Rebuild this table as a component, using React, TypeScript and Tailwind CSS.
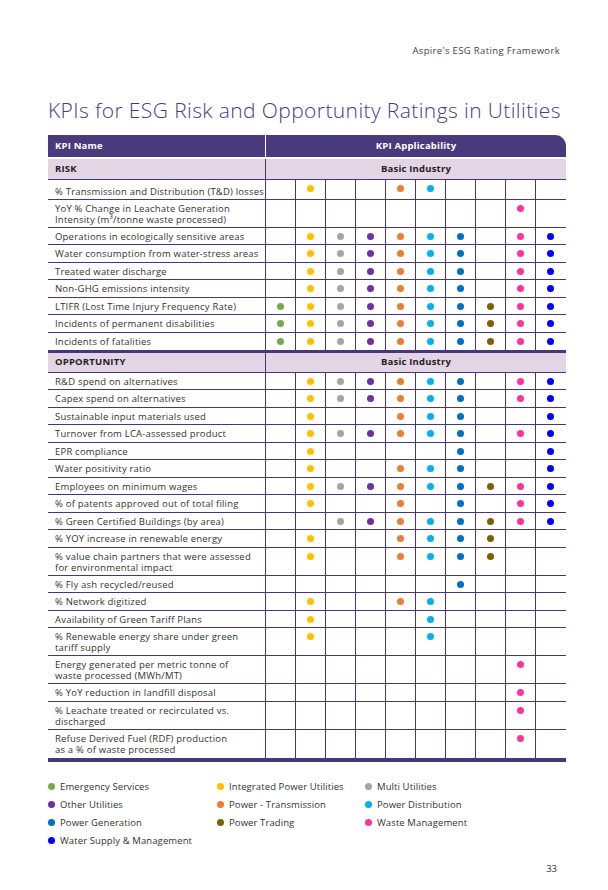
import React from 'react';

const COLORS = ['#70ad47', '#ffc000', '#a5a5a5', '#7030a0', '#ed7d31', '#00b0f0', '#0070c0', '#7f6000', '#ff3399', '#0000ff'];

type Row = { name: React.ReactNode; tall?: boolean; first?: boolean; dots: number[] };

const A8 = [2, 3, 4, 5, 6, 7, 9, 10];
const ALL = [1, 2, 3, 4, 5, 6, 7, 8, 9, 10];

const risk: Row[] = [
  { name: '% Transmission and Distribution (T&D) losses', first: true, dots: [2, 5, 6] },
  { name: <>YoY % Change in Leachate Generation<br />Intensity (m³/tonne waste processed)</>, tall: true, dots: [9] },
  { name: 'Operations in ecologically sensitive areas', dots: A8 },
  { name: 'Water consumption from water-stress areas', dots: A8 },
  { name: 'Treated water discharge', dots: A8 },
  { name: 'Non-GHG emissions intensity', dots: A8 },
  { name: 'LTIFR (Lost Time Injury Frequency Rate)', dots: ALL },
  { name: 'Incidents of permanent disabilities', dots: ALL },
  { name: 'Incidents of fatalities', dots: ALL },
];

const opp: Row[] = [
  { name: 'R&D spend on alternatives', dots: A8 },
  { name: 'Capex spend on alternatives', dots: A8 },
  { name: 'Sustainable input materials used', dots: [2, 5, 6, 7, 10] },
  { name: 'Turnover from LCA-assessed product', dots: A8 },
  { name: 'EPR compliance', dots: [2, 7, 10] },
  { name: 'Water positivity ratio', dots: [2, 5, 6, 7, 10] },
  { name: 'Employees on minimum wages', dots: [2, 3, 4, 5, 6, 7, 8, 9, 10] },
  { name: '% of patents approved out of total filing', dots: [2, 5, 7, 9, 10] },
  { name: '% Green Certified Buildings (by area)', dots: [3, 4, 5, 6, 7, 8, 9, 10] },
  { name: '% YOY increase in renewable energy', dots: [2, 5, 6, 7, 8] },
  { name: <>% value chain partners that were assessed<br />for environmental impact</>, tall: true, dots: [2, 5, 6, 7, 8] },
  { name: '% Fly ash recycled/reused', dots: [7] },
  { name: '% Network digitized', dots: [2, 5, 6] },
  { name: 'Availability of Green Tariff Plans', dots: [2, 6] },
  { name: <>% Renewable energy share under green<br />tariff supply</>, tall: true, dots: [2, 6] },
  { name: <>Energy generated per metric tonne of<br />waste processed (MWh/MT)</>, tall: true, dots: [9] },
  { name: '% YoY reduction in landfill disposal', dots: [9] },
  { name: <>% Leachate treated or recirculated vs.<br />discharged</>, tall: true, dots: [9] },
  { name: <>Refuse Derived Fuel (RDF) production<br />as a % of waste processed</>, tall: true, dots: [9] },
];

const legend: [number, string][][] = [
  [[1, 'Emergency Services'], [2, 'Integrated Power Utilities'], [3, 'Multi Utilities']],
  [[4, 'Other Utilities'], [5, 'Power - Transmission'], [6, 'Power Distribution']],
  [[7, 'Power Generation'], [8, 'Power Trading'], [9, 'Waste Management']],
  [[10, 'Water Supply & Management']],
];

function Dot({ c }: { c: number }) {
  return <span className="block w-[7px] h-[7px] shrink-0 rounded-full" style={{ backgroundColor: COLORS[c - 1] }} />;
}

function DataRow({ row, last }: { row: Row; last?: boolean }) {
  const h = row.first ? 'h-[20px]' : row.tall ? 'h-[28px]' : 'h-[17.5px]';
  return (
    <div className={`flex ${h} ${last ? '' : 'border-b border-[#46377b]'}`}>
      <div className={`w-[217px] shrink-0 pl-[7px] leading-[11px] tracking-[0.2px] whitespace-nowrap ${row.first ? 'pt-[6px]' : 'pt-[3px]'}`}>{row.name}</div>
      {Array.from({ length: 10 }, (_, i) => (
        <div key={i} className="w-[30px] shrink-0 border-l border-[#46377b] flex justify-center pt-[5px]">
          {row.dots.includes(i + 1) ? <Dot c={i + 1} /> : null}
        </div>
      ))}
    </div>
  );
}

function SectionHead({ label, h }: { label: string; h: string }) {
  return (
    <div className={`flex ${h} bg-[#e4d5e5] border-b border-[#46377b] font-bold text-[#222] tracking-[0.2px]`}>
      <div className="w-[217px] shrink-0 pl-[7px] flex items-center">{label}</div>
      <div className="flex-1 border-l border-[#46377b] flex items-center justify-center">Basic Industry</div>
    </div>
  );
}

export default function App() {
  return (
    <div className="w-[608px] h-[890px] bg-white font-['Open_Sans',sans-serif] text-[#333] flex flex-col">
      <div className="pt-[45px] pr-[48px] text-right text-[9.5px] leading-[12px] tracking-[0.35px] text-[#444]">Aspire's ESG Rating Framework</div>
      <h1 className="pl-[48px] mt-[40px] text-[21px] leading-[26px] font-light text-[#4b3a86] tracking-[0.4px] whitespace-nowrap">
        KPIs for ESG Risk and Opportunity Ratings in Utilities
      </h1>
      <div className="ml-[48px] mt-[12px] w-[518px] text-[9.5px]">
        <div className="flex h-[24px] bg-[#483a7d] rounded-tr-[11px] text-white font-bold border-b-[2px] border-white tracking-[0.2px]">
          <div className="w-[217px] shrink-0 pl-[7px] flex items-center">KPI Name</div>
          <div className="flex-1 border-l border-white flex items-center justify-center">KPI Applicability</div>
        </div>
        <SectionHead label="RISK" h="h-[20.5px]" />
        {risk.map((r, i) => <DataRow key={i} row={r} last={i === risk.length - 1} />)}
        <div className="h-[3px] bg-[#46377b]" />
        <SectionHead label="OPPORTUNITY" h="h-[19.5px]" />
        {opp.map((r, i) => <DataRow key={i} row={r} last={i === opp.length - 1} />)}
        <div className="h-[4px] bg-[#46377b]" />
      </div>
      <div className="ml-[48px] mt-[19px] flex flex-col gap-[7px] text-[9.5px] leading-[11px] tracking-[0.1px] text-[#333]">
        {legend.map((line, i) => (
          <div key={i} className="flex">
            {line.map(([c, label], j) => (
              <div key={j} className={`flex items-center gap-[5px] ${j === 0 ? 'w-[169px]' : j === 1 ? 'w-[148px]' : ''}`}>
                <Dot c={c} />
                <span>{label}</span>
              </div>
            ))}
          </div>
        ))}
      </div>
      <div className="mt-auto pb-[15px] pr-[51px] text-right text-[9.5px] leading-[12px] text-[#333]">33</div>
    </div>
  );
}
